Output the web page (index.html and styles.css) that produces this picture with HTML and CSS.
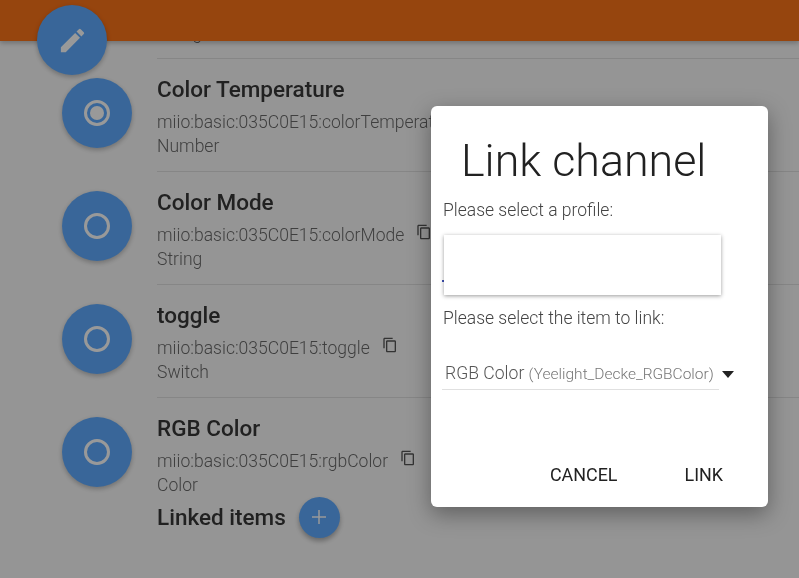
FILE: index.html
```html
<!DOCTYPE html>
<html lang="en">
<head>
<meta charset="utf-8">
<title>Link channel</title>
<link rel="stylesheet" href="styles.css">
</head>
<body>
<div class="page">
  <header class="toolbar"></header>
  <button class="fab fab-edit" aria-label="Edit">
    <svg viewBox="0 0 24 24" width="31" height="31"><path fill="currentColor" d="M3 17.25V21h3.75L17.81 9.94l-3.75-3.75L3 17.25zM20.71 7.04a1 1 0 0 0 0-1.41l-2.34-2.34a1 1 0 0 0-1.41 0l-1.83 1.83 3.75 3.75 1.83-1.83z"/></svg>
  </button>
  <main class="list">
    <div class="row row-clipped">
      <div class="row-text"><div class="sub">String</div></div>
    </div>
    <div class="row">
      <div class="avatar"><span class="ring"><span class="dot"></span></span></div>
      <div class="row-text">
        <div class="name">Color Temperature</div>
        <div class="sub">miio:basic:035C0E15:colorTemperature</div>
        <div class="sub">Number</div>
      </div>
    </div>
    <div class="row">
      <div class="avatar"><span class="ring"></span></div>
      <div class="row-text">
        <div class="name">Color Mode</div>
        <div class="sub">miio:basic:035C0E15:colorMode<svg class="copy" viewBox="0 0 24 24"><path fill="currentColor" d="M16 1H4c-1.1 0-2 .9-2 2v14h2V3h12V1zm3 4H8c-1.1 0-2 .9-2 2v14c0 1.1.9 2 2 2h11c1.1 0 2-.9 2-2V7c0-1.1-.9-2-2-2zm0 16H8V7h11v14z"/></svg></div>
        <div class="sub">String</div>
      </div>
    </div>
    <div class="row">
      <div class="avatar"><span class="ring"></span></div>
      <div class="row-text">
        <div class="name">toggle</div>
        <div class="sub">miio:basic:035C0E15:toggle<svg class="copy" viewBox="0 0 24 24"><path fill="currentColor" d="M16 1H4c-1.1 0-2 .9-2 2v14h2V3h12V1zm3 4H8c-1.1 0-2 .9-2 2v14c0 1.1.9 2 2 2h11c1.1 0 2-.9 2-2V7c0-1.1-.9-2-2-2zm0 16H8V7h11v14z"/></svg></div>
        <div class="sub">Switch</div>
      </div>
    </div>
    <div class="row row-last">
      <div class="avatar"><span class="ring"></span></div>
      <div class="row-text">
        <div class="name">RGB Color</div>
        <div class="sub">miio:basic:035C0E15:rgbColor<svg class="copy" viewBox="0 0 24 24"><path fill="currentColor" d="M16 1H4c-1.1 0-2 .9-2 2v14h2V3h12V1zm3 4H8c-1.1 0-2 .9-2 2v14c0 1.1.9 2 2 2h11c1.1 0 2-.9 2-2V7c0-1.1-.9-2-2-2zm0 16H8V7h11v14z"/></svg></div>
        <div class="sub">Color</div>
      </div>
    </div>
    <div class="linked">
      <span class="name">Linked items</span>
      <button class="fab-mini" aria-label="Add">
        <svg viewBox="0 0 24 24" width="24" height="24"><path fill="currentColor" d="M19 12.75h-6.25V19h-1.5v-6.25H5v-1.5h6.25V5h1.5v6.25H19z"/></svg>
      </button>
    </div>
  </main>
</div>
<div class="scrim"></div>
<section class="dialog">
  <h1 class="dialog-title">Link channel</h1>
  <p class="label">Please select a profile:</p>
  <div class="profile-field">
    <span class="focus-bar"></span>
    <div class="menu"></div>
  </div>
  <p class="label label-item">Please select the item to link:</p>
  <div class="select-wrap">
    <div class="select-value">RGB Color <small>(Yeelight_Decke_RGBColor)</small></div>
    <span class="arrow"></span>
  </div>
  <div class="actions">
    <button class="action">CANCEL</button>
    <button class="action">LINK</button>
  </div>
</section>
</body>
</html>
```
FILE: styles.css
```css
* { box-sizing: border-box; }
html, body { margin: 0; height: 100%; overflow: hidden; }
body { font-family: Roboto, "Liberation Sans", sans-serif; background: #f9f9f9; color: #3c3c3c; }
.page { position: relative; height: 578px; overflow: hidden; will-change: transform; }
.toolbar { position: relative; z-index: 2; height: 41px; background: #fb7318; box-shadow: 0 2px 5px rgba(0,0,0,.26); }
.fab { position: absolute; z-index: 3; left: 37px; top: 5px; width: 70px; height: 70px; border: 0; border-radius: 50%; background: #5fabff; color: #fff; display: flex; align-items: center; justify-content: center; padding: 0; box-shadow: 0 2px 5px rgba(0,0,0,.26); }
.list { margin-top: -95px; }
.row { display: flex; align-items: flex-start; height: 113px; padding: 19px 0 0 62px; position: relative; }
.row::after { content: ""; position: absolute; left: 157px; right: 0; bottom: 0; height: 1px; background: #e0e0e0; }
.row-last { height: 97px; }
.row-last::after { display: none; }
.row-clipped { padding-top: 76px; }
.row-clipped .row-text { margin-left: 95px; }
.avatar { flex: none; width: 70px; height: 70px; border-radius: 50%; background: #5fabff; display: flex; align-items: center; justify-content: center; box-shadow: 0 2px 5px rgba(0,0,0,.26); }
.ring { width: 26px; height: 26px; border: 3px solid #fff; border-radius: 50%; display: flex; align-items: center; justify-content: center; }
.dot { width: 14px; height: 14px; border-radius: 50%; background: #fff; }
.row-text { margin: -1px 0 0 25px; white-space: nowrap; }
.name { font-size: 22.5px; font-weight: 500; line-height: 24px; color: #383838; }
.sub { font-size: 17.55px; font-weight: 300; line-height: 24px; color: #6a6a6a; display: flex; align-items: flex-start; }
.row-text .name { margin-bottom: 9px; }
.copy { width: 16px; height: 16px; margin: 1px 0 0 12px; color: #555; flex: none; }
.linked { display: flex; align-items: center; margin: 0 0 0 157px; height: 44px; }
.fab-mini { margin-left: 13px; width: 41px; height: 41px; border: 0; border-radius: 50%; padding: 0; background: #5fabff; color: #fff; display: flex; align-items: center; justify-content: center; box-shadow: 0 3px 5px rgba(0,0,0,.3); }
.scrim { position: fixed; inset: 0; z-index: 10; background: rgba(0,0,0,.4); }
.dialog { position: fixed; z-index: 11; left: 431px; top: 106px; width: 337px; height: 401px; background: #fff; border-radius: 6px; padding: 0 12px; box-shadow: 0 7px 22px rgba(0,0,0,.36); will-change: transform; }
.dialog-title { margin: 27px 0 0 18px; font-size: 44.8px; line-height: 56px; font-weight: 300; color: #212121; }
.label { margin: 0; font-size: 17.5px; font-weight: 300; line-height: 24px; color: #444; }
.dialog-title + .label { margin-top: 9px; }
.profile-field { position: relative; height: 60px; margin-top: 13px; }
.focus-bar { position: absolute; left: -1px; top: 45px; width: 2px; height: 2px; background: #3f51b5; }
.menu { position: absolute; left: 1px; top: 0; width: 277px; height: 60px; background: #fff; box-shadow: 0 1px 4px rgba(0,0,0,.4); }
.label-item { margin-top: 11px; }
.select-wrap { position: relative; margin-top: 31px; width: 277px; height: 29px; margin-left: -1px; border-bottom: 1px solid #e0e0e0; }
.select-value { padding-left: 3px; font-size: 17.6px; font-weight: 300; line-height: 24px; color: #555; white-space: nowrap; }
.select-value small { font-size: 15.5px; color: #777; }
.arrow { position: absolute; left: 280px; top: 10px; border-left: 6px solid transparent; border-right: 6px solid transparent; border-top: 7px solid #222; }
.actions { display: flex; justify-content: flex-end; gap: 67px; margin-top: 73px; padding-right: 45px; margin-right: -12px; }
.action { border: 0; background: none; padding: 0; font-family: inherit; font-size: 17.9px; font-weight: 400; line-height: 24px; color: #212121; }
```
